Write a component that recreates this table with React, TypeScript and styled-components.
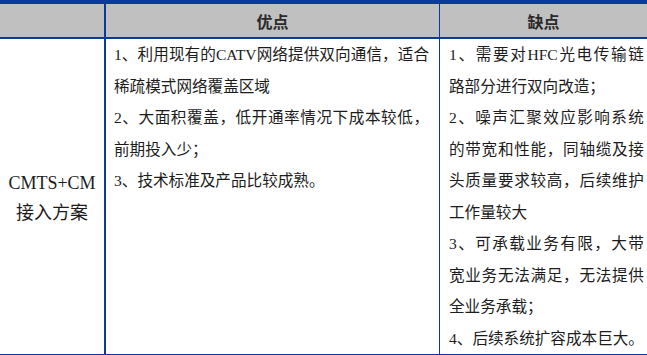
import React from 'react';
import styled, { createGlobalStyle } from 'styled-components';

const BLUE = '#0b3a9c';

const GlobalStyle = createGlobalStyle`
    html, body {
        margin: 0;
        padding: 0;
        background: #ffffff;
    }
    body {
        font-family: "Liberation Serif", "Noto Sans CJK SC", serif;
        color: #1c1c1c;
    }
`;

const Table = styled.div`
    width: 647px;
    border-top: 4px solid ${BLUE};
    border-bottom: 1px solid ${BLUE};
`;

const Row = styled.div<{ $head?: boolean }>`
    display: grid;
    grid-template-columns: 106px 334px 1fr;
    background: ${p => (p.$head ? '#c0c0c0' : '#ffffff')};
    border-bottom: ${p => (p.$head ? `2px solid ${BLUE}` : 'none')};
`;

const Cell = styled.div<{ $sep?: number }>`
    border-right: ${p => (p.$sep ? `${p.$sep}px solid ${BLUE}` : 'none')};
`;

const HeadCell = styled(Cell)`
    height: 33px;
    display: flex;
    align-items: center;
    justify-content: center;
    font-size: 16px;
    font-weight: bold;
    color: #2a2a2a;
`;

const NameCell = styled(Cell)`
    display: flex;
    flex-direction: column;
    align-items: center;
    justify-content: center;
    font-size: 18px;
    line-height: 30px;
    padding-top: 2px;
`;

const TextCell = styled(Cell)<{ $pl: number; $pr: number }>`
    padding: 0 ${p => p.$pr}px 0 ${p => p.$pl}px;
    font-size: 15.6px;
    line-height: 31.5px;
`;

const Line = styled.div<{ $end?: boolean }>`
    white-space: nowrap;
    text-align: justify;
    text-align-last: ${p => (p.$end ? 'left' : 'justify')};
`;

const Para = ({ lines }: { lines: string[] }) => (
    <>
        {lines.map((l, i) => (
            <Line key={i} $end={i === lines.length - 1}>{l}</Line>
        ))}
    </>
);

const pros = [
    ['1、利用现有的CATV网络提供双向通信，适合', '稀疏模式网络覆盖区域'],
    ['2、大面积覆盖，低开通率情况下成本较低，', '前期投入少；'],
    ['3、技术标准及产品比较成熟。'],
];

const cons = [
    ['1、需要对HFC光电传输链', '路部分进行双向改造；'],
    ['2、噪声汇聚效应影响系统', '的带宽和性能，同轴缆及接', '头质量要求较高，后续维护', '工作量较大'],
    ['3、可承载业务有限，大带', '宽业务无法满足，无法提供', '全业务承载；'],
    ['4、后续系统扩容成本巨大。'],
];

export default function App() {
    return (
        <>
            <GlobalStyle />
            <Table>
                <Row $head>
                    <HeadCell $sep={2} />
                    <HeadCell $sep={1}>优点</HeadCell>
                    <HeadCell>缺点</HeadCell>
                </Row>
                <Row>
                    <NameCell $sep={2}>
                        <span>CMTS+CM</span>
                        <span>接入方案</span>
                    </NameCell>
                    <TextCell $sep={1} $pl={8} $pr={10}>
                        {pros.map((p, i) => <Para key={i} lines={p} />)}
                    </TextCell>
                    <TextCell $pl={9} $pr={7}>
                        {cons.map((p, i) => <Para key={i} lines={p} />)}
                    </TextCell>
                </Row>
            </Table>
        </>
    );
}
